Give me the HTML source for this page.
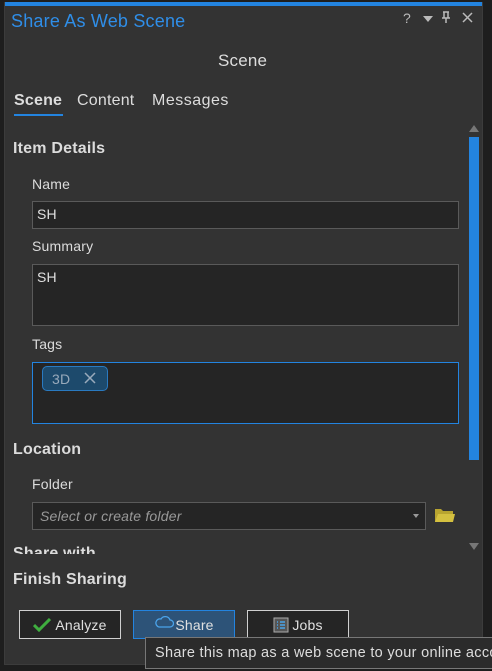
<!DOCTYPE html>
<html><head><meta charset="utf-8"><style>
*{margin:0;padding:0;box-sizing:border-box}
html,body{overflow:hidden}
body{width:492px;height:671px;background:#1e1e1e;font-family:"Liberation Sans",sans-serif;color:#e0e0e0;position:relative;font-size:14px;letter-spacing:0.2px}
.a{position:absolute}
.panel{left:4px;top:2px;width:479px;height:663px;background:#333;border:1px solid #3c3c3c}
.inp{background:#252525;border:1px solid #5a5a5a}
.lbl{font-size:14px;color:#dcdcdc}
.h{font-size:16px;font-weight:bold;color:#dcdcdc}
.btn{border:1px solid #d0d0d0;background:#252525;height:29px;top:610px;width:102px;font-size:14px;display:flex;align-items:center;justify-content:center;color:#e0e0e0}
</style></head><body>
<div class="a panel"></div>
<div class="a" style="left:5px;top:2px;width:477px;height:4px;background:#2384e0"></div>
<div class="a" style="left:11px;top:11px;font-size:18px;color:#2f8ee8">Share As Web Scene</div>
<div class="a" style="left:403px;top:10px;font-size:14px;color:#bbb">?</div>
<svg class="a" style="left:423px;top:16px" width="10" height="6"><path d="M0 0H10L5 6Z" fill="#bbb"/></svg>
<svg class="a" style="left:441px;top:11px" width="10" height="13"><path d="M2 1H8M3 1V7M7 1V7M1 7H9M5 7V12" stroke="#bbb" stroke-width="1.5" fill="none"/></svg>
<svg class="a" style="left:462px;top:12px" width="11" height="11"><path d="M1 1L10 10M10 1L1 10" stroke="#bbb" stroke-width="1.5"/></svg>
<div class="a" style="left:218px;top:51px;font-size:17px;color:#ddd">Scene</div>
<div class="a" style="left:14px;top:92px;font-size:16px;font-weight:bold;color:#ddd">Scene</div>
<div class="a" style="left:14px;top:114px;width:49px;height:2px;background:#2384e0"></div>
<div class="a" style="left:77px;top:92px;font-size:16px;color:#ddd">Content</div>
<div class="a" style="left:152px;top:92px;font-size:16px;color:#ddd;letter-spacing:0.5px">Messages</div>
<svg class="a" style="left:469px;top:124px" width="10" height="8"><path d="M0 8H10L5 1Z" fill="#777"/></svg>
<div class="a" style="left:469px;top:137px;width:10px;height:323px;background:#2384e0"></div>
<svg class="a" style="left:469px;top:543px" width="10" height="8"><path d="M0 0H10L5 7Z" fill="#777"/></svg>
<div class="a h" style="left:13px;top:140px">Item Details</div>
<div class="a lbl" style="left:32px;top:176px">Name</div>
<div class="a inp" style="left:32px;top:201px;width:427px;height:28px"></div>
<div class="a" style="left:37px;top:206px;font-size:14px">SH</div>
<div class="a lbl" style="left:32px;top:238px">Summary</div>
<div class="a inp" style="left:32px;top:264px;width:427px;height:62px"></div>
<div class="a" style="left:37px;top:269px;font-size:14px">SH</div>
<div class="a lbl" style="left:32px;top:336px">Tags</div>
<div class="a" style="left:32px;top:362px;width:427px;height:62px;background:#252525;border:1px solid #2384e0"></div>
<div class="a" style="left:42px;top:366px;width:66px;height:25px;background:#1d4a6c;border:1px solid #2a7ac0;border-radius:5px"></div>
<div class="a" style="left:52px;top:371px;font-size:14px;color:#9ab">3D</div>
<svg class="a" style="left:84px;top:372px" width="12" height="12"><path d="M1 1L11 11M11 1L1 11" stroke="#9ab" stroke-width="1.5"/></svg>
<div class="a h" style="left:13px;top:441px">Location</div>
<div class="a lbl" style="left:32px;top:476px">Folder</div>
<div class="a inp" style="left:32px;top:502px;width:394px;height:28px"></div>
<div class="a" style="left:40px;top:508px;font-size:14px;font-style:italic;color:#999">Select or create folder</div>
<svg class="a" style="left:413px;top:514px" width="6" height="4"><path d="M0 0H6L3 4Z" fill="#999"/></svg>
<svg class="a" style="left:434px;top:506px" width="22" height="18"><path d="M1 3H7L9 5H19V16H1Z" fill="#b8a430"/><path d="M4 8H21L19 16H1Z" fill="#d4c040"/></svg>
<div class="a" style="left:5px;top:543px;width:460px;height:11px;overflow:hidden"><div style="position:absolute;left:8px;top:2px" class="h">Share with</div></div>
<div class="a h" style="left:13px;top:571px">Finish Sharing</div>
<div class="a btn" style="left:19px"><svg width="18" height="14" style="margin-right:4px"><path d="M1 7L6 12L17 1" stroke="#3fae3f" stroke-width="3" fill="none"/></svg>Analyze</div>
<div class="a btn" style="left:133px;background:#2d5378;border-color:#2384e0"><svg width="20" height="14" style="margin-right:1px;margin-top:-8px"><path d="M5 13H16A3.5 3.5 0 0 0 16 6A5 5 0 0 0 7 5A4 4 0 0 0 5 13Z" stroke="#4aa3ea" stroke-width="1.3" fill="none"/></svg>Share</div>
<div class="a btn" style="left:247px"><svg width="16" height="16" style="margin-right:3px"><rect x="1" y="1" width="14" height="14" fill="#555" stroke="#aaa"/><path d="M4 5H5M7 5H12M4 8H5M7 8H12M4 11H5M7 11H12" stroke="#4aa3ea" stroke-width="1.5"/></svg>Jobs</div>
<div class="a" style="left:145px;top:637px;width:347px;height:32px;background:#2b2b2b;border:1px solid #777;border-right:none;overflow:hidden"><div style="position:absolute;left:9px;top:7px;font-size:14.5px;color:#ddd;white-space:nowrap;letter-spacing:0.3px">Share this map as a web scene to your online account</div></div>
</body></html>
